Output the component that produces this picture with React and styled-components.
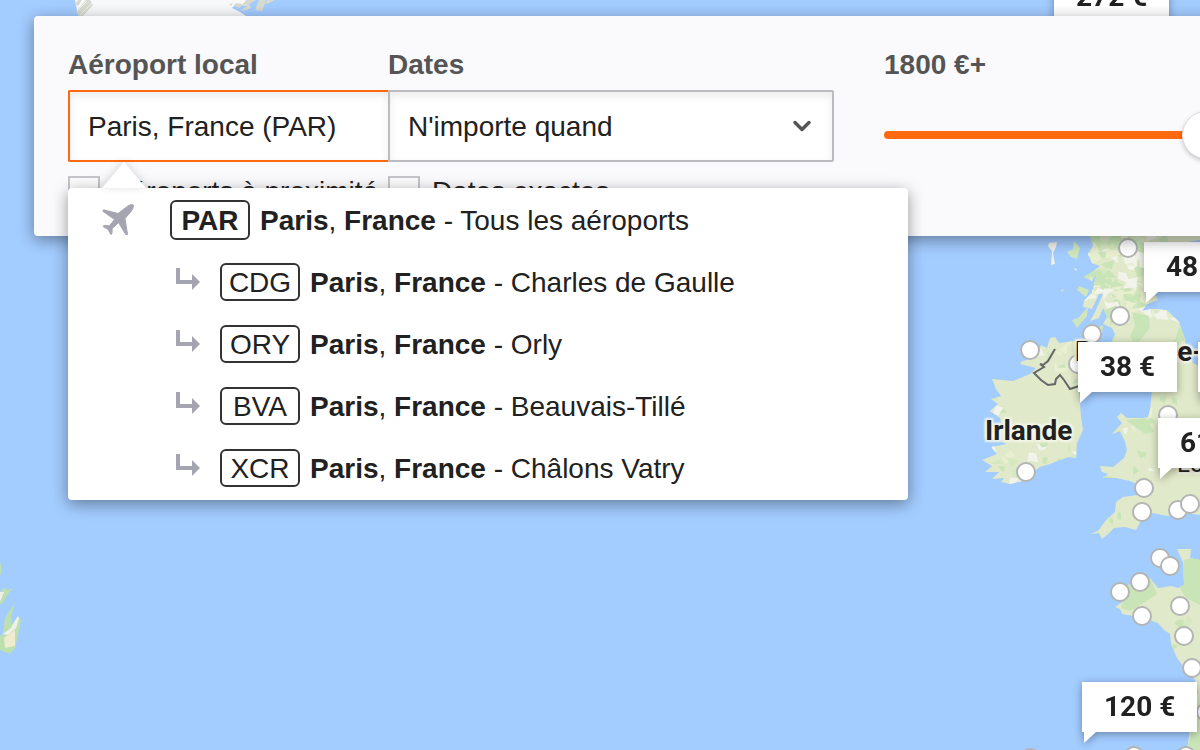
import React, { useState } from 'react';
import styled, { createGlobalStyle, css } from 'styled-components';
import { ChevronDown } from 'lucide-react';

const GlobalStyle = createGlobalStyle`
  * {
    box-sizing: border-box;
  }
  body {
    margin: 0;
    overflow: hidden;
    color: #212121;
    font-family: 'Liberation Sans', Arial, sans-serif;
    font-size: 28px;
    line-height: 32px;
  }
  button, input, select {
    margin: 0;
    font: inherit;
    color: inherit;
  }
`;

const airports = [
  { code: 'PAR', name: 'Tous les aéroports' },
  { code: 'CDG', name: 'Charles de Gaulle', child: true },
  { code: 'ORY', name: 'Orly', child: true },
  { code: 'BVA', name: 'Beauvais-Tillé', child: true },
  { code: 'XCR', name: 'Châlons Vatry', child: true },
];

const prices = [
  { x: 1054, y: -28, text: '272 €' },
  { x: 1198, y: 342, text: '54 €' },
  { x: 1144, y: 242, text: '48 €' },
  { x: 1078, y: 342, text: '38 €' },
  { x: 1158, y: 418, text: '61 €' },
  { x: 1082, y: 682, text: '120 €' },
];

const dots = [
  [1128, 248], [1120, 316], [1092, 334], [1030, 350], [1078, 364], [1168, 415],
  [1026, 472], [1144, 488], [1142, 512], [1178, 510], [1190, 504], [1160, 558],
  [1170, 566], [1140, 582], [1120, 592], [1142, 616], [1180, 606], [1184, 636],
  [1192, 668], [1206, 712], [1134, 756], [1186, 756], [1030, 758],
];

const land = {
  ireland:
    'M1050 338L1055 337L1059 343L1075 341L1086 348L1090 370L1079 390L1080 403L1081 417L1083 430L1077 443L1076 458L1069 457L1060 460L1050 464L1040 467L1032 473L1022 481L1010 484L1001 482L1004 478L992 479L999 472L985 472L992 466L982 460L997 454L991 447L1007 444L992 438L990 430L1003 431L1000 418L990 411L998 404L991 399L1001 396L996 389L992 379L1013 381L1030 374L1036 368L1020 364L1022 361L1036 358L1041 345L1047 348Z',
  britain:
    'M1089 232L1093 246L1088 254L1092 263L1100 266L1092 272L1084 277L1092 281L1097 272L1092 293L1084 301L1083 307L1092 309L1099 294L1103 294L1094 314L1090 321L1099 318L1103 308L1107 317L1103 324L1112 328L1115 334L1110 345L1120 352L1140 370L1152 390L1150 410L1148 417L1143 418L1127 418L1121 413L1117 417L1122 423L1112 434L1120 431L1125 442L1127 450L1124 458L1113 467L1100 466L1102 472L1108 474L1103 478L1116 478L1130 481L1143 487L1152 484L1154 490L1137 495L1123 497L1116 502L1115 512L1106 520L1098 531L1090 534L1099 533L1102 539L1108 534L1114 528L1125 527L1136 530L1142 519L1152 513L1168 516L1184 513L1200 515L1200 367L1192 362L1186 345L1184 336L1179 322L1167 310L1151 309L1142 311L1147 304L1158 300L1156 296L1152 288L1156 270L1160 250L1175 244L1200 240L1200 232Z',
  france:
    'M1177 549L1191 549L1190 558L1200 560L1200 750L1187 750L1192 716L1198 692L1195 680L1186 670L1177 658L1171 644L1170 634L1164 630L1158 623L1143 618L1133 616L1122 614L1120 609L1115 607L1124 601L1112 596L1124 586L1140 582L1150 578L1158 588L1171 586L1178 588L1184 585L1183 563Z',
  isles:
    'M1074 241L1080 248L1077 259L1071 257L1067 252L1073 249ZM1079 286L1089 290L1086 297L1077 290ZM1078 318L1088 307L1087 316L1077 328L1072 320ZM1097 328L1103 325L1102 334L1097 333ZM1061 290L1064 289L1062 292Z',
  hebrides: 'M1049 243L1057 242L1056 247L1053 253L1055 264L1051 265L1052 251L1048 246ZM1074 268L1077 269L1076 271Z',
  south: 'M0 562L2 570L0 576ZM0 592L4 588L8 590L13 588L8 594L2 604L0 604ZM15 602L11 617L13 626L18 616L21 620L18 635L15 648L10 654L0 650L0 636L3 634L5 618Z',
};

const shades = ['#c9e5b8', '#c9e5b8', '#d6e8bf', '#f2f3ea', '#e8efcf'];

// small shards of woodland and bare ground, always the same ones
const scatter = (x, y, w, h, count, size, seed) => {
  let s = seed;
  const rand = () => {
    s = (s * 16807) % 2147483647;
    return s / 2147483647;
  };
  return Array.from({ length: count }, () => {
    const cx = x + rand() * w;
    const cy = y + rand() * h;
    const points = [0, 1, 2, 3].map((i) => {
      const a = i * 1.57 + rand() * 1.5;
      const r = size * (0.3 + rand());
      return `${(cx + Math.cos(a) * r).toFixed(1)},${(cy + Math.sin(a) * r).toFixed(1)}`;
    });
    return { points: points.join(' '), fill: shades[Math.floor(rand() * shades.length)] };
  });
};

const shards = [
  ...scatter(1086, 232, 80, 80, 120, 8, 71),
  ...scatter(1105, 310, 90, 45, 20, 8, 12),
  ...scatter(1030, 335, 60, 45, 18, 6, 33),
  ...scatter(982, 380, 20, 70, 18, 6, 5),
  ...scatter(985, 445, 95, 38, 26, 6, 92),
  ...scatter(1100, 412, 50, 74, 22, 6, 44),
  ...scatter(1150, 395, 50, 110, 8, 5, 28),
  ...scatter(1095, 498, 105, 34, 9, 5, 61),
  ...scatter(1135, 580, 65, 160, 18, 7, 18),
];

const Map = () => (
  <MapDrawing viewBox="0 0 1200 750" preserveAspectRatio="xMinYMin slice" aria-hidden="true">
    <defs>
      <clipPath id="land">
        <path d={land.ireland} />
        <path d={land.britain} />
        <path d={land.france} />
      </clipPath>
    </defs>
    <path d="M75 0L77 10L80 16H246L240 12L232 8L236 4L246 6L248 0Z" fill="#f8f9fa" />
    <path
      d="M78 0L75 4L78 6L82 0ZM86 0L76 12L79 16H83L93 5L90 0ZM229 4L233 3L231 6ZM236 3L242 4L240 8L234 6ZM246 0L242 5L247 6L240 11L246 10L251 8L249 4L256 0Z"
      fill="#dadbd0"
    />
    <path d="M77 11L87 1M80 15L92 3" stroke="#eff1ec" strokeWidth="1" />
    <path d="M255 10L259 0L266 0L262 11ZM265 4L267 0L275 0L269 3Z" fill="#dadbd0" />
    <g fill="#e0e9c9">
      <path d={land.ireland} />
      <path d={land.britain} />
      <path d={land.france} />
    </g>
    <path d={land.isles} fill="#cfe6bd" />
    <path d={land.hebrides} fill="#eef0e9" />
    <g clipPath="url(#land)">
      {shards.map((s) => (
        <polygon key={s.points} points={s.points} fill={s.fill} />
      ))}
      <path
        d="M1184 560L1200 556V605L1186 598L1180 588ZM1128 584L1150 578L1157 594L1145 602L1130 611L1121 608ZM1190 740L1200 690V750H1186Z"
        fill="#c9e5b8"
      />
      <path
        d="M1132 312L1149 316L1150 328L1142 338L1136 346L1130 336L1135 326ZM1126 420L1146 418L1154 432L1145 434Z"
        fill="#c9e5b8"
      />
    </g>
    <path
      d="M1055 349L1048 361L1043 365L1040 364L1044 367L1034 373L1041 380L1048 385L1055 384L1056 379L1060 375L1064 380L1070 389L1079 386"
      fill="none"
      stroke="#666"
      strokeWidth="2"
    />
    <path d={land.south} fill="#bde0b0" />
    <path d="M18 616L19 618L16 628L8 635L3 634L11 628L14 622ZM0 592L4 592L0 602Z" fill="#f0f0ea" />
    <path d="M4 638L15 630L15 646L5 648Z" fill="#eeebcf" />
    {dots.map(([x, y]) => (
      <circle key={`${x}-${y}`} cx={x} cy={y} r="9" fill="#fff" stroke="#b2b5b3" strokeWidth="2" />
    ))}
  </MapDrawing>
);

const PlaneIcon = () => (
  <svg
    width="32"
    height="32"
    viewBox="0 0 32 32"
    fill="#a5a5b2"
    stroke="#a5a5b2"
    strokeWidth="1"
    strokeLinejoin="round"
    aria-hidden="true"
  >
    <path d="M31 .8C29.500 0 26 1.500 24 3.500L16 9.500L1.500 5.800L.8 7.200L12.500 15.500L7.500 21.800L1.700 21.600L1.200 22.600L6.200 25.400L8.900 30.500L9.900 29.800L10.200 24.500L16.500 18.600L23.800 30.500L25.500 30.500L23 14.500L29 7.500C31 5 32 1.800 31 .8Z" />
  </svg>
);

const BranchIcon = () => (
  <svg width="24" height="28" viewBox="0 0 24 28" fill="#a5a5b2" aria-hidden="true">
    <path d="M0 0H4V12H16V6L24 14L16 22V16H0Z" />
  </svg>
);

const App = () => {
  const [airport, setAirport] = useState('Paris, France (PAR)');
  const [budget, setBudget] = useState(1800);

  return (
    <>
      <GlobalStyle />
      <Page>
        <MapArea>
          <Map />
          <MapLabel $x={985} $y={415}>Irlande</MapLabel>
          <MapLabel $x={1075} $y={336}>Royaume-Uni</MapLabel>
          <MapLabel $x={1177} $y={448} $city>Londres</MapLabel>
          {prices.map((p) => (
            <PriceTag key={p.text} type="button" $x={p.x} $y={p.y}>{p.text}</PriceTag>
          ))}
        </MapArea>

        <SearchPanel>
          <AirportField>
            <Label htmlFor="airport">Aéroport local</Label>
            <AirportInput id="airport" value={airport} onChange={(e) => setAirport(e.target.value)} />
            <CheckLabel>
              <Checkbox type="checkbox" />
              Aéroports à proximité
            </CheckLabel>
            <Suggestions>
              {airports.map((a) => (
                <li key={a.code}>
                  <Suggestion type="button" $child={a.child}>
                    {a.child ? <BranchIcon /> : <PlaneIcon />}
                    <Code $child={a.child}>{a.code}</Code>
                    <Place>
                      <b>Paris</b>, <b>France</b> - {a.name}
                    </Place>
                  </Suggestion>
                </li>
              ))}
            </Suggestions>
          </AirportField>

          <DatesField>
            <Label htmlFor="dates">Dates</Label>
            <SelectBox>
              <Select id="dates">
                <option>N'importe quand</option>
              </Select>
              <ChevronDown size={28} strokeWidth={3} color="#555" />
            </SelectBox>
            <CheckLabel>
              <Checkbox type="checkbox" />
              Dates exactes
            </CheckLabel>
          </DatesField>

          <BudgetField>
            <Label htmlFor="budget">{budget} €+</Label>
            <Slider
              id="budget"
              type="range"
              min="0"
              max="1800"
              value={budget}
              onChange={(e) => setBudget(e.target.value)}
            />
          </BudgetField>
        </SearchPanel>
      </Page>
    </>
  );
};

const Page = styled.main`
  position: relative;
  min-height: 100vh;
  padding-top: 16px;
  overflow: hidden;
  background: #a3ccff;
`;

const MapArea = styled.div`
  position: absolute;
  inset: 0;
  overflow: hidden;
  font-family: Roboto, sans-serif;
  font-weight: 700;
`;

const MapDrawing = styled.svg`
  display: block;
  width: 100%;
  height: 100%;
`;

const MapLabel = styled.span`
  position: absolute;
  left: ${(p) => p.$x}px;
  top: ${(p) => p.$y}px;
  font-size: ${(p) => (p.$city ? 24 : 28)}px;
  font-weight: ${(p) => (p.$city ? 400 : 700)};
  white-space: nowrap;
  text-shadow: 0 0 3px #f2f5e8, 2px 2px 2px #f2f5e8, -2px -2px 2px #f2f5e8,
    2px -2px 2px #f2f5e8, -2px 2px 2px #f2f5e8;
`;

const PriceTag = styled.button`
  position: absolute;
  left: ${(p) => p.$x}px;
  top: ${(p) => p.$y}px;
  height: 50px;
  padding: 0 22px;
  border: 0;
  background: #fff;
  white-space: nowrap;
  filter: drop-shadow(0 2px 4px rgba(0, 0, 0, 0.35));

  &::after {
    content: '';
    position: absolute;
    left: 2px;
    top: 100%;
    border-top: 11px solid #fff;
    border-right: 12px solid transparent;
  }
`;

/* the panel runs past the right edge of the window */
const SearchPanel = styled.form`
  position: relative;
  display: flex;
  margin: 0 -64px 0 34px;
  padding: 33px 34px 28px;
  border-radius: 4px;
  background: #fafafc;
  box-shadow: 0 4px 16px rgba(0, 0, 0, 0.4);
`;

const AirportField = styled.div`
  position: relative;
  flex: 0 0 320px;
`;

const DatesField = styled.div`
  flex: 0 0 446px;
  margin-right: 50px;
`;

const BudgetField = styled.div`
  flex: 1;
`;

const Label = styled.label`
  display: block;
  margin-bottom: 9px;
  color: #555;
  font-weight: 700;
`;

const box = css`
  display: block;
  width: 100%;
  height: 72px;
  padding: 2px 18px 0;
  border: 2px solid #bbbcc0;
  background: #fff;
  box-shadow: inset 0 4px 8px rgba(0, 0, 0, 0.08);
  outline: none;
`;

const AirportInput = styled.input`
  ${box}
  border-color: #ff690f;
  border-right: 0;
  border-radius: 2px 0 0 2px;
`;

const SelectBox = styled.div`
  position: relative;

  svg {
    position: absolute;
    right: 18px;
    top: 22px;
    pointer-events: none;
  }
`;

const Select = styled.select`
  ${box}
  border-radius: 0 2px 2px 0;
  appearance: none;
`;

const CheckLabel = styled.label`
  display: flex;
  align-items: center;
  gap: 12px;
  margin-top: 14px;
  white-space: nowrap;
`;

const Checkbox = styled.input`
  width: 32px;
  height: 32px;
  border: 2px solid #c4c5c8;
  background: #fcfcfc;
  appearance: none;
`;

const Suggestions = styled.ul`
  position: absolute;
  z-index: 1;
  left: 0;
  top: 139px;
  width: 840px;
  margin: 0;
  padding: 1px 0;
  border-radius: 4px;
  background: #fff;
  box-shadow: 0 4px 16px rgba(0, 0, 0, 0.4);
  list-style: none;

  &::before {
    content: '';
    position: absolute;
    left: 34px;
    bottom: 100%;
    border: 22px solid transparent;
    border-top: 0;
    border-bottom: 26px solid #fff;
    filter: drop-shadow(0 -1px 4px rgba(0, 0, 0, 0.15));
  }
`;

const Suggestion = styled.button`
  display: flex;
  align-items: center;
  width: 100%;
  height: 62px;
  padding: 0 0 0 ${(p) => (p.$child ? 108 : 34)}px;
  border: 0;
  background: none;
  text-align: left;

  svg {
    margin-right: ${(p) => (p.$child ? 20 : 36)}px;
  }
`;

const Code = styled.span`
  display: flex;
  align-items: center;
  justify-content: center;
  width: 80px;
  height: ${(p) => (p.$child ? 38 : 40)}px;
  margin-right: 10px;
  padding-top: 2px;
  border: 2px solid #333;
  border-radius: 6px;
  font-weight: ${(p) => (p.$child ? 400 : 700)};
`;

const Place = styled.span`
  padding-top: 2px;
`;

const Slider = styled.input`
  display: block;
  width: 100%;
  height: 48px;
  margin-top: 30px;
  background: none;
  appearance: none;

  &::-webkit-slider-runnable-track {
    height: 8px;
    border-radius: 4px;
    background: #ff690f;
  }

  &::-webkit-slider-thumb {
    width: 48px;
    height: 48px;
    margin-top: -20px;
    border: 1px solid #ddd;
    border-radius: 50%;
    background: #fff;
    box-shadow: 0 2px 4px rgba(0, 0, 0, 0.2);
    appearance: none;
  }
`;

export default App;
